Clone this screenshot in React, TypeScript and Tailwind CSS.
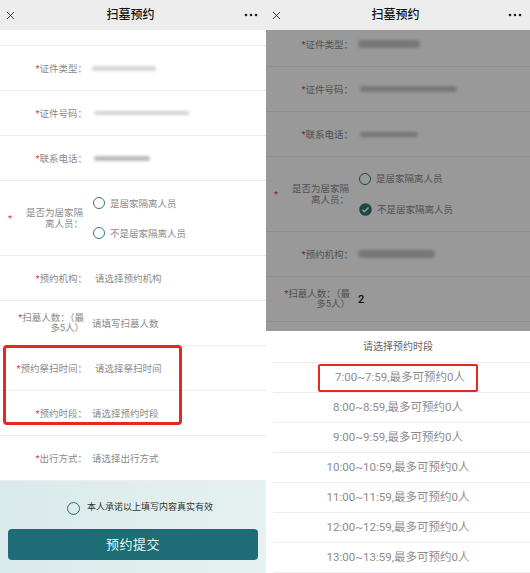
import { X } from "lucide-react";
import type { ReactNode } from "react";

const slots = [
  "7:00~7:59,最多可预约0人",
  "8:00~8:59,最多可预约0人",
  "9:00~9:59,最多可预约0人",
  "10:00~10:59,最多可预约0人",
  "11:00~11:59,最多可预约0人",
  "12:00~12:59,最多可预约0人",
  "13:00~13:59,最多可预约0人",
];

function Header() {
  return (
    <div className="h-[30px] shrink-0 bg-[#ededed] flex items-center pl-[4px] pr-[8px]">
      <X className="w-[13px] h-[13px] text-[#222]" strokeWidth={1.6} />
      <div className="flex-1 text-center text-[12px] font-medium text-[#111]">扫墓预约</div>
      <svg width="14" height="4" viewBox="0 0 14 4" className="text-[#222]">
        <circle cx="2" cy="2" r="1.3" fill="currentColor" />
        <circle cx="7" cy="2" r="1.3" fill="currentColor" />
        <circle cx="12" cy="2" r="1.3" fill="currentColor" />
      </svg>
    </div>
  );
}

function Star() {
  return <span className="text-[#d0454f]">*</span>;
}

function Row({ label, children }: { label: string; children: ReactNode }) {
  return (
    <div className="h-[45px] flex items-center border-b border-[#ececec]">
      <div className="w-[88px] shrink-0 text-right pr-[1px]">
        <Star />
        {label}
      </div>
      <div className="ml-[4px] flex items-center">{children}</div>
    </div>
  );
}

function Blur({ w, h, c }: { w: number; h: number; c: string }) {
  return (
    <div
      className="rounded-full blur-[1.5px]"
      style={{ width: w, height: h, backgroundColor: c }}
    />
  );
}

function Radio({ checked }: { checked?: boolean }) {
  if (checked) {
    return (
      <svg width="13" height="13" viewBox="0 0 13 13">
        <circle cx="6.5" cy="6.5" r="6.3" fill="#2d7b78" />
        <path d="M3.5 6.7l2 2 4-4.2" stroke="#fff" strokeWidth="1.6" fill="none" />
      </svg>
    );
  }
  return <div className="w-[12px] h-[12px] rounded-full border-[1.5px] border-[#2d7b78]" />;
}

function Form({ filled }: { filled?: boolean }) {
  return (
    <div className="text-[9.5px] leading-[11px] text-[#8a8a8a]">
      <div className="h-[16px] border-b border-[#ececec]" />
      <Row label="证件类型：">
        <Blur w={filled ? 62 : 64} h={filled ? 8 : 5} c={filled ? "#c6c6c6" : "#d6d6d6"} />
      </Row>
      <Row label="证件号码：">
        <div className="ml-[2px]">
          <Blur w={filled ? 97 : 95} h={filled ? 6 : 4} c={filled ? "#c8c8c8" : "#d2d2d2"} />
        </div>
      </Row>
      <Row label="联系电话：">
        <div className="ml-[2px]">
          <Blur w={filled ? 58 : 56} h={5} c={filled ? "#c4c4c4" : "#b9b9b9"} />
        </div>
      </Row>
      <div className="h-[75px] flex items-center border-b border-[#ececec]">
        <div className="w-[88px] shrink-0 flex items-center pl-[8px]">
          <Star />
          <div className="ml-[9px] w-[62px] text-right leading-[11.5px]">是否为居家隔离人员：</div>
        </div>
        <div className="ml-[5px] flex flex-col gap-[18px]">
          <div className="flex items-center gap-[5px]">
            <Radio />
            <span>是居家隔离人员</span>
          </div>
          <div className="flex items-center gap-[5px]">
            <Radio checked={filled} />
            <span>不是居家隔离人员</span>
          </div>
        </div>
      </div>
      <Row label="预约机构：">
        {filled ? (
          <Blur w={77} h={8} c="#c6c6c6" />
        ) : (
          <span className="ml-[3px]">请选择预约机构</span>
        )}
      </Row>
      <div className="h-[45px] flex items-center border-b border-[#ececec]">
        <div className="w-[84px] shrink-0 text-right leading-[10.5px]">
          <Star />
          扫墓人数：（最
          <br />
          多5人）
        </div>
        <div className="ml-[8px]">
          {filled ? (
            <span className="text-[11px] font-medium text-[#222]">2</span>
          ) : (
            <span>请填写扫墓人数</span>
          )}
        </div>
      </div>
      {!filled && (
        <>
          <Row label="预约祭扫时间：">
            <span className="ml-[3px]">请选择祭扫时间</span>
          </Row>
          <Row label="预约时段：">
            <span>请选择预约时段</span>
          </Row>
          <Row label="出行方式：">
            <span>请选择出行方式</span>
          </Row>
        </>
      )}
    </div>
  );
}

export default function App() {
  return (
    <div className="w-[530px] h-[573px] flex overflow-hidden bg-white font-['Roboto','Noto_Sans_CJK_SC',sans-serif]">
      {/* left phone */}
      <div className="w-[266px] shrink-0 flex flex-col">
        <Header />
        <div className="relative flex-1 flex flex-col">
          <Form />
          <div className="flex-1 bg-gradient-to-r from-[#d9eaea] to-[#e6f1f0] px-[8px] pt-[20px]">
            <div className="h-[14px] flex items-center justify-center gap-[7px] pl-[14px]">
              <div className="w-[13px] h-[13px] rounded-full border-[1.5px] border-[#2b6d70]" />
              <span className="text-[9px] text-[#333]">本人承诺以上填写内容真实有效</span>
            </div>
            <button className="mt-[14px] w-full h-[31px] rounded-[4px] bg-[#1d6c76] text-[#e6f4f4] text-[13px] tracking-[0.5px]">
              预约提交
            </button>
          </div>
          {/* annotation */}
          <div className="absolute left-[3px] top-[315px] w-[179px] h-[80px] rounded-[4px] border-[3px] border-[#e8271f]" />
        </div>
      </div>

      {/* right phone */}
      <div className="w-[264px] shrink-0 flex flex-col">
        <Header />
        <div className="relative flex-1 overflow-hidden">
          <div className="-mt-[24px]">
            <Form filled />
          </div>
          <div className="absolute inset-0 bg-black/40" />
          <div className="absolute inset-x-0 bottom-0 h-[242px] bg-white flex flex-col">
            <div className="h-[32px] shrink-0 ml-[7px] border-b border-[#ececec] flex items-center justify-center pr-[7px] text-[10px] text-[#666]">
              请选择预约时段
            </div>
            {slots.map((s, i) => (
              <div
                key={s}
                className="h-[30px] shrink-0 ml-[7px] border-b border-[#ececec] flex items-center justify-center pr-[7px] text-[11.5px] text-[#8c8c8c]"
              >
                {i === 0 ? (
                  <span className="h-[28px] flex items-center pl-[15px] pr-[11px] rounded-[2px] border-[2.5px] border-[#e8271f]">
                    {s}
                  </span>
                ) : (
                  s
                )}
              </div>
            ))}
          </div>
        </div>
      </div>
    </div>
  );
}
